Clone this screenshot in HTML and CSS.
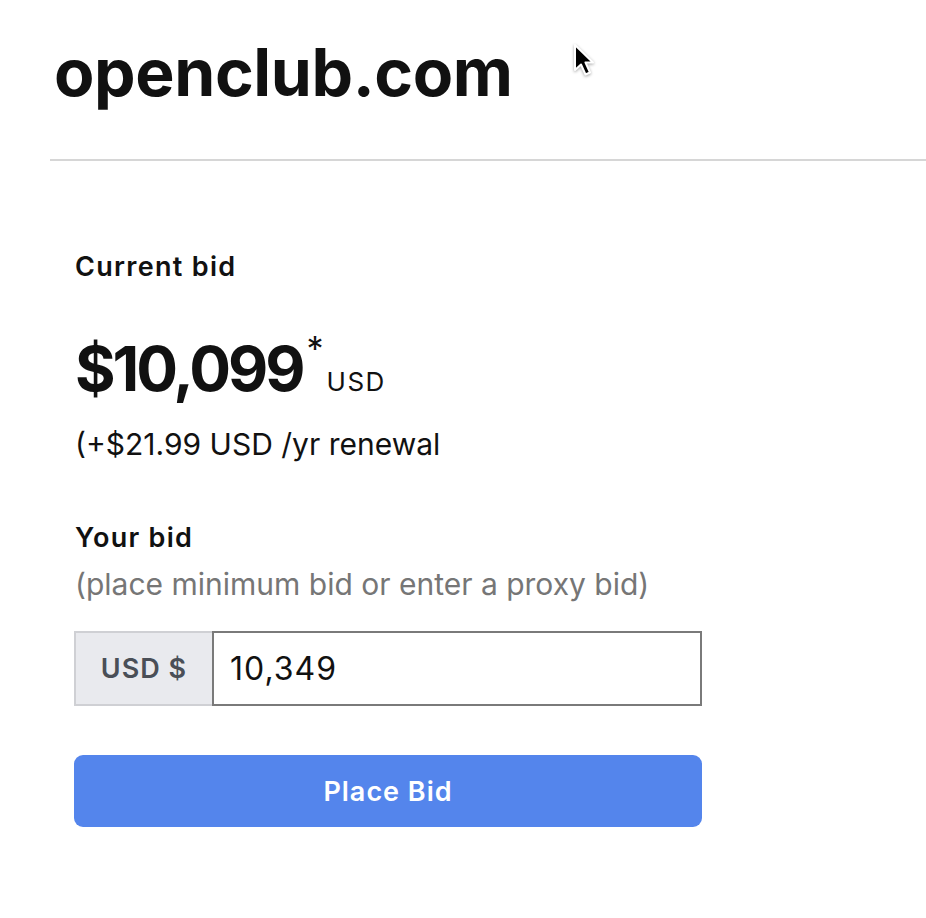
FILE: index.html
```html
<!DOCTYPE html>
<html>
<head>
<meta charset="utf-8">
<link rel="stylesheet" href="styles.css">
</head>
<body>
<div class="page">
  <header class="header">
    <h1 class="domain">openclub.com</h1>
  </header>
  <main class="panel">
    <div class="label">Current bid</div>
    <div class="price">
      <span class="amount">$10,099</span><span class="star">*</span><span class="cur">USD</span>
    </div>
    <div class="renewal">(+$21.99 USD /yr renewal</div>
    <div class="label your">Your bid</div>
    <div class="hint">(place minimum bid or enter a proxy bid)</div>
    <div class="group">
      <div class="prefix">USD $</div>
      <div class="field">10,349</div>
    </div>
    <button class="btn">Place Bid</button>
  </main>
  <svg class="cursor" width="24" height="36" viewBox="0 0 24 36" aria-hidden="true">
    <path d="M2 2 L2 27 L8 21.5 L12.5 31.5 L17 29.5 L12.5 19.5 L20 19.5 Z" fill="#000" stroke="#fff" stroke-width="2" stroke-linejoin="round"/>
  </svg>
</div>
</body>
</html>
```
FILE: styles.css
```css
html, body { margin: 0; padding: 0; background: #fff; }
body { font-family: "Inter", "Noto Sans", sans-serif; color: #111; }
.page { width: 926px; position: relative; }
.header {
  margin-left: 50px;
  border-bottom: 2px solid #d6d6d6;
  height: 161px;
  box-sizing: border-box;
}
.domain {
  margin: 0;
  padding: 32px 0 0 4px;
  font-size: 66px;
  font-weight: 700;
  line-height: 80px;
  letter-spacing: -0.4px;
}
.panel { padding: 86px 0 0 74px; width: 628px; }
.label { font-size: 27px; font-weight: 600; line-height: 40px; letter-spacing: 1.3px; padding-left: 1px; }
.price { display: flex; align-items: baseline; margin-top: 47px; height: 70px; padding-left: 1px; }
.amount { font-size: 62px; font-weight: 700; letter-spacing: -3px; line-height: 70px; }
.star { font-size: 34px; align-self: flex-start; margin-left: 4px; line-height: 30px; }
.cur { font-size: 26px; margin-left: 3px; letter-spacing: 1.5px; line-height: 40px; }
.renewal { font-size: 30px; line-height: 40px; margin-top: 20px; padding-left: 1px; }
.your { margin-top: 54px; }
.hint { font-size: 30px; line-height: 40px; color: #767676; margin-top: 6px; padding-left: 1px; }
.group {
  display: flex;
  margin-top: 27px;
  height: 75px;
}
.prefix {
  width: 138px;
  box-sizing: border-box;
  background: #e9eaee;
  border: 2px solid #cfd0d4;
  border-right: none;
  display: flex; align-items: center; justify-content: center;
  font-size: 27px; font-weight: 600; color: #4a4f57; letter-spacing: 1px;
}
.field {
  flex: 1;
  border: 2px solid #7a7a7a;
  display: flex; align-items: center;
  padding-left: 16px;
  font-size: 32px; color: #111; letter-spacing: 1px;
}
.btn {
  display: block;
  margin-top: 49px;
  width: 628px;
  height: 72px;
  border: none;
  border-radius: 9px;
  background: #5485ec;
  color: #fff;
  font-family: inherit;
  font-size: 27px;
  font-weight: 600;
  letter-spacing: 1px;
}
.cursor {
  position: absolute;
  left: 573px;
  top: 43px;
  filter: drop-shadow(0 1px 1.5px rgba(0,0,0,0.35));
}
```
